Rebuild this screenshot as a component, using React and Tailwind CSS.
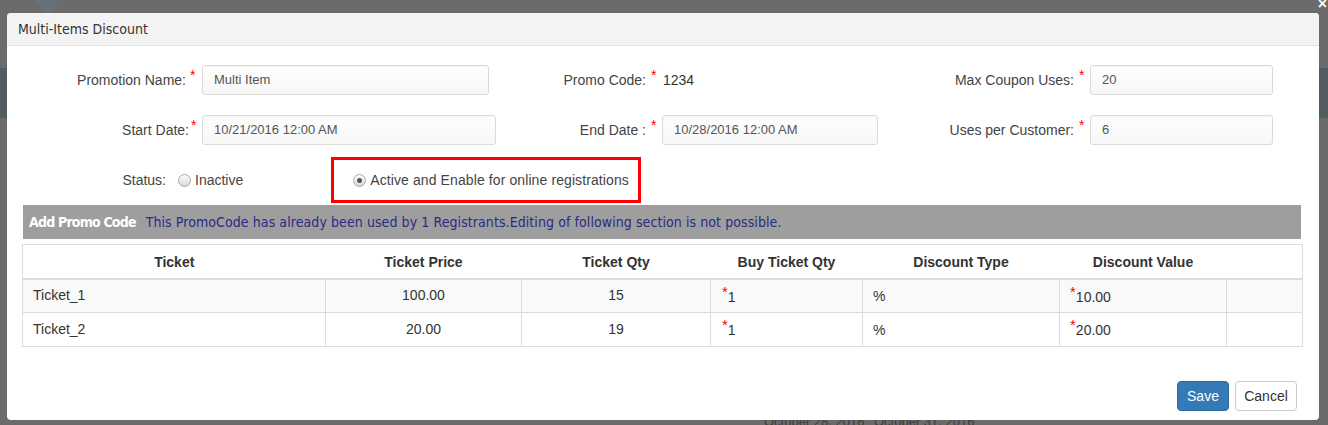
import React from 'react'

const sans = "font-['Liberation_Sans',Arial,sans-serif]"
const cond = "font-['DejaVu_Sans_Condensed','DejaVu_Sans',sans-serif] [font-stretch:condensed]"

function Star({ className = '' }) {
  return <span className={`text-[#f00] text-[14px] leading-none self-start mt-[3px] ${className}`}>*</span>
}

function Field({ value, width }) {
  return (
    <div
      className={`h-[30px] ${width} border border-[#dadada] rounded-[3px] bg-gradient-to-b from-[#fefefe] to-[#f7f7f7] shadow-[inset_0_1px_1px_rgba(0,0,0,0.04)] pl-[11px] flex items-center text-[13px] text-[#555]`}
    >
      {value}
    </div>
  )
}

function Radio({ checked }) {
  return (
    <span className="w-[13px] h-[13px] rounded-full border border-[#a9a9a9] bg-gradient-to-b from-[#fdfdfd] to-[#d9d9d9] flex items-center justify-center">
      {checked && <span className="w-[5px] h-[5px] rounded-full bg-[#555]" />}
    </span>
  )
}

const rows = [
  { ticket: 'Ticket_1', price: '100.00', qty: '15', buy: '1', type: '%', value: '10.00' },
  { ticket: 'Ticket_2', price: '20.00', qty: '19', buy: '1', type: '%', value: '20.00' },
]

export default function App() {
  return (
    <div className={`relative w-[1328px] h-[425px] overflow-hidden bg-[#6b6b6b] ${sans}`}>
      {/* dimmed page behind the dialog */}
      <div className="absolute left-0 top-[68px] w-[8px] h-[50px] bg-[#515d63]" />
      <div className="absolute right-0 top-[68px] w-[10px] h-[50px] bg-[#515d63]" />
      <div className="absolute left-[38px] top-[-6px] w-[18px] h-[16px] bg-[#66727a] rotate-45" />
      <div className="absolute left-[764px] top-[414px] text-[13px] leading-[16px] text-[#3d3d3d]">October 28, 2016</div>
      <div className="absolute left-[874px] top-[414px] text-[13px] leading-[16px] text-[#3d3d3d]">October 31, 2016</div>
      <div className="absolute right-[1px] top-[-3px] text-[16px] leading-[14px] font-bold text-white">×</div>

      <div className="relative ml-[7px] mt-[13px] w-[1312px] h-[407px] bg-white rounded-[4px] flex flex-col">
        <div className="h-[33px] bg-[#f3f3f3] border-b border-[#e3e3e3] rounded-t-[4px] flex items-center pl-[11px] pt-[1px]">
          <span className={`${cond} text-[14px] text-[#333]`}>Multi-Items Discount</span>
        </div>

        <div className="flex flex-col text-[14px] text-[#444]">
          {/* row 1 */}
          <div className="flex items-center mt-[19px]">
            <span className="w-[179px] text-right pt-[1px]">Promotion Name:</span>
            <span className="w-[16px] flex pl-[4px] self-stretch"><Star /></span>
            <Field value="Multi Item" width="w-[287px]" />
            <span className="w-[157px] text-right pt-[1px]">Promo Code:</span>
            <span className="w-[16px] flex pl-[5px] self-stretch"><Star /></span>
            <span className="w-[239px] pl-[1px] text-[#333]">1234</span>
            <span className="w-[173px] text-right pt-[1px]">Max Coupon Uses:</span>
            <span className="w-[16px] flex pl-[5px] self-stretch"><Star /></span>
            <Field value="20" width="w-[183px]" />
          </div>

          {/* row 2 */}
          <div className="flex items-center mt-[20px]">
            <span className="w-[182px] text-right pt-[1px]">Start Date:</span>
            <span className="w-[13px] flex pl-[2px] self-stretch"><Star /></span>
            <Field value="10/21/2016 12:00 AM" width="w-[294px]" />
            <span className="w-[150px] text-right pt-[1px]">End Date :</span>
            <span className="w-[16px] flex pl-[5px] self-stretch"><Star /></span>
            <Field value="10/28/2016 12:00 AM" width="w-[216px]" />
            <span className="w-[196px] text-right pt-[1px]">Uses per Customer:</span>
            <span className="w-[16px] flex pl-[5px] self-stretch"><Star /></span>
            <Field value="6" width="w-[183px]" />
          </div>

          {/* status */}
          <div className="flex items-center mt-[12px]">
            <span className="w-[159px] text-right">Status:</span>
            <span className="ml-[12px]"><Radio /></span>
            <span className="ml-[4px]">Inactive</span>
            <div className="ml-[88px] w-[310px] h-[46px] border-[3px] border-[#f00] flex items-center pl-[19px]">
              <Radio checked />
              <span className="ml-[4px] tracking-[0.1px]">Active and Enable for online registrations</span>
            </div>
          </div>
        </div>

        {/* section bar */}
        <div className={`mt-[2px] ml-[16px] w-[1278px] h-[34px] bg-[#9e9e9e] flex items-center pl-[6px] pt-[1px] ${cond} text-[14px]`}>
          <span className="font-bold text-white text-[14px] tracking-[-0.8px]">Add Promo Code</span>
          <span className="ml-[10px] text-[#2a2a86] tracking-[0.08px]">
            This PromoCode has already been used by 1 Registrants.Editing of following section is not possible.
          </span>
        </div>

        {/* tickets */}
        <table className="mt-[5px] ml-[15px] w-[1281px] border border-[#dcdcdc] border-collapse text-[14px] text-[#333] table-fixed">
          <colgroup>
            <col className="w-[303px]" />
            <col className="w-[196px]" />
            <col className="w-[189px]" />
            <col className="w-[152px]" />
            <col className="w-[197px]" />
            <col className="w-[167px]" />
            <col />
          </colgroup>
          <thead>
            <tr className="h-[34px] border-b-2 border-[#dcdcdc]">
              {['Ticket', 'Ticket Price', 'Ticket Qty', 'Buy Ticket Qty', 'Discount Type', 'Discount Value', ''].map((h, i) => (
                <th key={i} className="font-bold text-center px-[8px] pt-[2px]">{h}</th>
              ))}
            </tr>
          </thead>
          <tbody>
            {rows.map((r, i) => (
              <tr key={r.ticket} className={`h-[34px] ${i === 0 ? 'bg-[#f9f9f9]' : 'bg-white'}`}>
                <td className="border border-[#dcdcdc] px-[10px]">{r.ticket}</td>
                <td className="border border-[#dcdcdc] text-center">{r.price}</td>
                <td className="border border-[#dcdcdc] text-center">{r.qty}</td>
                <td className="border border-[#dcdcdc] px-[11px] pt-[2px]">
                  <span className="text-[#f00] text-[15px] relative top-[-5px]">*</span>{r.buy}
                </td>
                <td className="border border-[#dcdcdc] px-[10px] pt-[2px]">{r.type}</td>
                <td className="border border-[#dcdcdc] px-[10px] pt-[2px]">
                  <span className="text-[#f00] text-[15px] relative top-[-5px]">*</span>{r.value}
                </td>
                <td className="border border-[#dcdcdc]" />
              </tr>
            ))}
          </tbody>
        </table>

        {/* footer */}
        <div className="flex justify-end gap-[6px] mt-[34px] pr-[22px]">
          <button className="h-[30px] w-[52px] rounded-[4px] bg-[#337ab7] border border-[#2e6da4] text-white text-[14px]">Save</button>
          <button className="h-[30px] w-[62px] rounded-[4px] bg-white border border-[#ccc] text-[#333] text-[14px]">Cancel</button>
        </div>
      </div>
    </div>
  )
}
